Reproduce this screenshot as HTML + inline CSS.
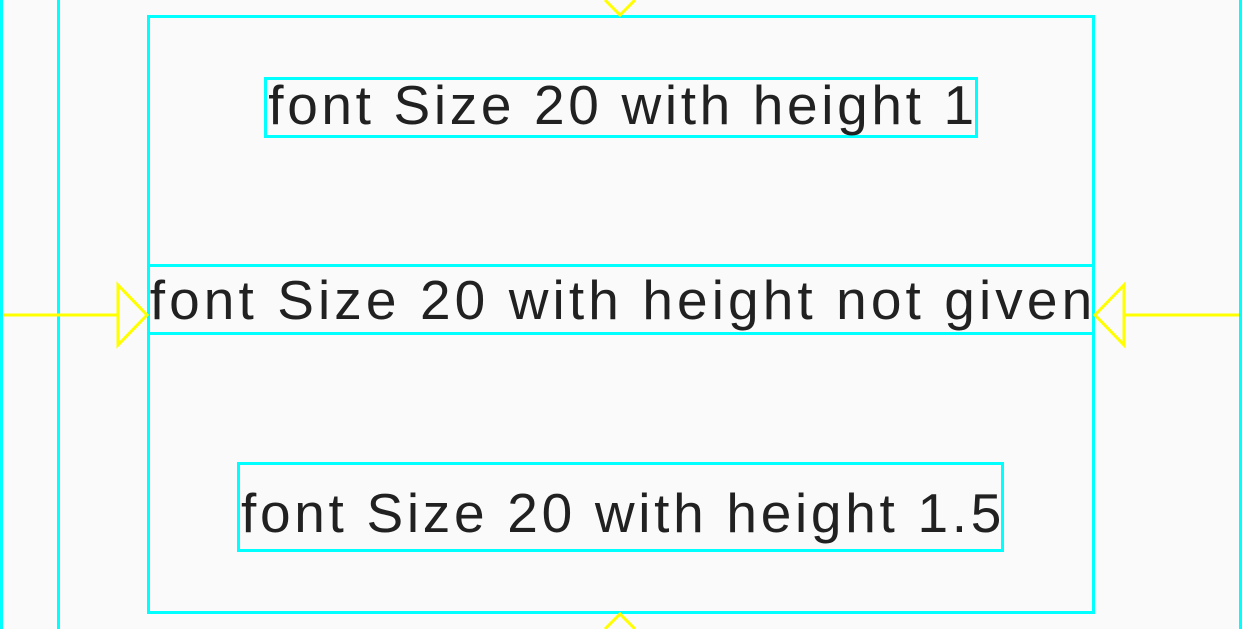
<!DOCTYPE html>
<html><head><meta charset="utf-8"><style>
html,body{margin:0;padding:0;width:1242px;height:629px;overflow:hidden;background:#fafafa}
.b{position:absolute;box-sizing:border-box;border:3px solid #00ffff}
.l{position:absolute;background:#00ffff}
.t{position:absolute;font-family:"Liberation Sans",sans-serif;font-size:55px;color:#212121;white-space:nowrap;line-height:1;text-align:center;letter-spacing:4.1px;box-sizing:border-box;padding-left:4px}
</style></head><body>
<div class="l" style="left:0;top:0;width:3px;height:629px"></div>
<div class="l" style="left:57px;top:0;width:3px;height:629px"></div>
<div class="l" style="left:1239px;top:0;width:3px;height:629px"></div>
<div class="b" style="left:147px;top:15px;width:948px;height:599px"></div>
<div class="b" style="left:264px;top:77px;width:714px;height:61px"></div>
<div class="b" style="left:147px;top:264px;width:948px;height:71px"></div>
<div class="b" style="left:237px;top:462px;width:767px;height:90px"></div>
<div class="t" style="left:200px;top:78px;width:842px;letter-spacing:3.65px">font Size 20 with height 1</div>
<div class="t" style="left:100px;top:273px;width:1042px">font Size 20 with height not given</div>
<div class="t" style="left:200px;top:486px;width:842px;letter-spacing:3.7px">font Size 20 with height 1.5</div>
<svg style="position:absolute;left:0;top:0" width="1242" height="629">
<g fill="none" stroke="#ffff00" stroke-width="3">
<line x1="3" y1="315" x2="118" y2="315"/>
<polygon points="118,285 147,315 118,345"/>
<line x1="1124" y1="315" x2="1239" y2="315"/>
<polygon points="1124,285 1095,315 1124,345"/>
<polyline points="605,0 620,15 635,0"/>
<polyline points="605,629 620,614 635,629"/>
</g></svg>
</body></html>
